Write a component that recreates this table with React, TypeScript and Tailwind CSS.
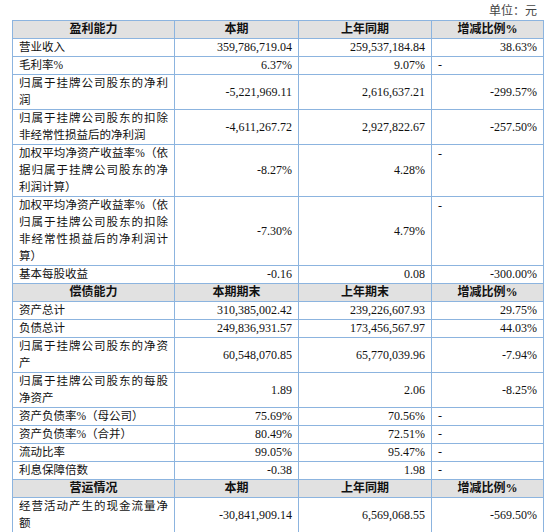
import React from "react";

type Row = {
  label: string[];
  a: string;
  b: string;
  c: string;
  top?: boolean;
};

type Section = {
  head: [string, string, string, string];
  rows: Row[];
};

const sections: Section[] = [
  {
    head: ["盈利能力", "本期", "上年同期", "增减比例%"],
    rows: [
      { label: ["营业收入"], a: "359,786,719.04", b: "259,537,184.84", c: "38.63%" },
      { label: ["毛利率%"], a: "6.37%", b: "9.07%", c: "-" },
      { label: ["归属于挂牌公司股东的净利", "润"], a: "-5,221,969.11", b: "2,616,637.21", c: "-299.57%" },
      {
        label: ["归属于挂牌公司股东的扣除", "非经常性损益后的净利润"],
        a: "-4,611,267.72",
        b: "2,927,822.67",
        c: "-257.50%",
      },
      {
        label: ["加权平均净资产收益率%（依", "据归属于挂牌公司股东的净", "利润计算）"],
        a: "-8.27%",
        b: "4.28%",
        c: "-",
        top: true,
      },
      {
        label: ["加权平均净资产收益率%（依", "归属于挂牌公司股东的扣除", "非经常性损益后的净利润计", "算）"],
        a: "-7.30%",
        b: "4.79%",
        c: "-",
        top: true,
      },
      { label: ["基本每股收益"], a: "-0.16", b: "0.08", c: "-300.00%" },
    ],
  },
  {
    head: ["偿债能力", "本期期末", "上年期末", "增减比例%"],
    rows: [
      { label: ["资产总计"], a: "310,385,002.42", b: "239,226,607.93", c: "29.75%" },
      { label: ["负债总计"], a: "249,836,931.57", b: "173,456,567.97", c: "44.03%" },
      { label: ["归属于挂牌公司股东的净资", "产"], a: "60,548,070.85", b: "65,770,039.96", c: "-7.94%" },
      { label: ["归属于挂牌公司股东的每股", "净资产"], a: "1.89", b: "2.06", c: "-8.25%" },
      { label: ["资产负债率%（母公司）"], a: "75.69%", b: "70.56%", c: "-" },
      { label: ["资产负债率%（合并）"], a: "80.49%", b: "72.51%", c: "-" },
      { label: ["流动比率"], a: "99.05%", b: "95.47%", c: "-" },
      { label: ["利息保障倍数"], a: "-0.38", b: "1.98", c: "-" },
    ],
  },
  {
    head: ["营运情况", "本期", "上年同期", "增减比例%"],
    rows: [
      { label: ["经营活动产生的现金流量净", "额"], a: "-30,841,909.14", b: "6,569,068.55", c: "-569.50%" },
    ],
  },
];

const cell = "border border-[#8cb4df] px-[6px] py-0 leading-[17px]";

export default function App() {
  return (
    <div className="w-[557px] h-[532px] overflow-hidden bg-white text-[12px] text-[#111] [font-family:'Liberation_Serif','Noto_Sans_CJK_SC',serif]">
      <div className="w-[543px] pt-[3px] pr-[6px] text-right leading-[17px] text-[#444]">单位：元</div>
      <table className="ml-[12px] w-[531px] table-fixed border-collapse">
        <colgroup>
          <col className="w-[162px]" />
          <col className="w-[124px]" />
          <col className="w-[133px]" />
          <col className="w-[112px]" />
        </colgroup>
        <tbody>
          {sections.map((s) => (
            <React.Fragment key={s.head[0]}>
              <tr className="bg-[#e1e1e1] font-bold">
                {s.head.map((h) => (
                  <td key={h} className={`${cell} text-center`}>
                    {h}
                  </td>
                ))}
              </tr>
              {s.rows.map((r) => (
                <tr key={r.label.join("")}>
                  <td className={`${cell} text-[11.5px]`}>
                    {r.label.map((line, i) => (
                      <div
                        key={i}
                        className={`whitespace-nowrap ${
                          i < r.label.length - 1 ? "[text-align-last:justify] text-justify" : "text-left"
                        }`}
                      >
                        {line}
                      </div>
                    ))}
                  </td>
                  <td className={`${cell} text-right align-middle`}>{r.a}</td>
                  <td className={`${cell} text-right align-middle`}>{r.b}</td>
                  <td
                    className={`${cell} ${r.c === "-" ? "text-left" : "text-right"} ${
                      r.top ? "align-top pt-[1px]" : "align-middle"
                    }`}
                  >
                    {r.c}
                  </td>
                </tr>
              ))}
            </React.Fragment>
          ))}
        </tbody>
      </table>
    </div>
  );
}
